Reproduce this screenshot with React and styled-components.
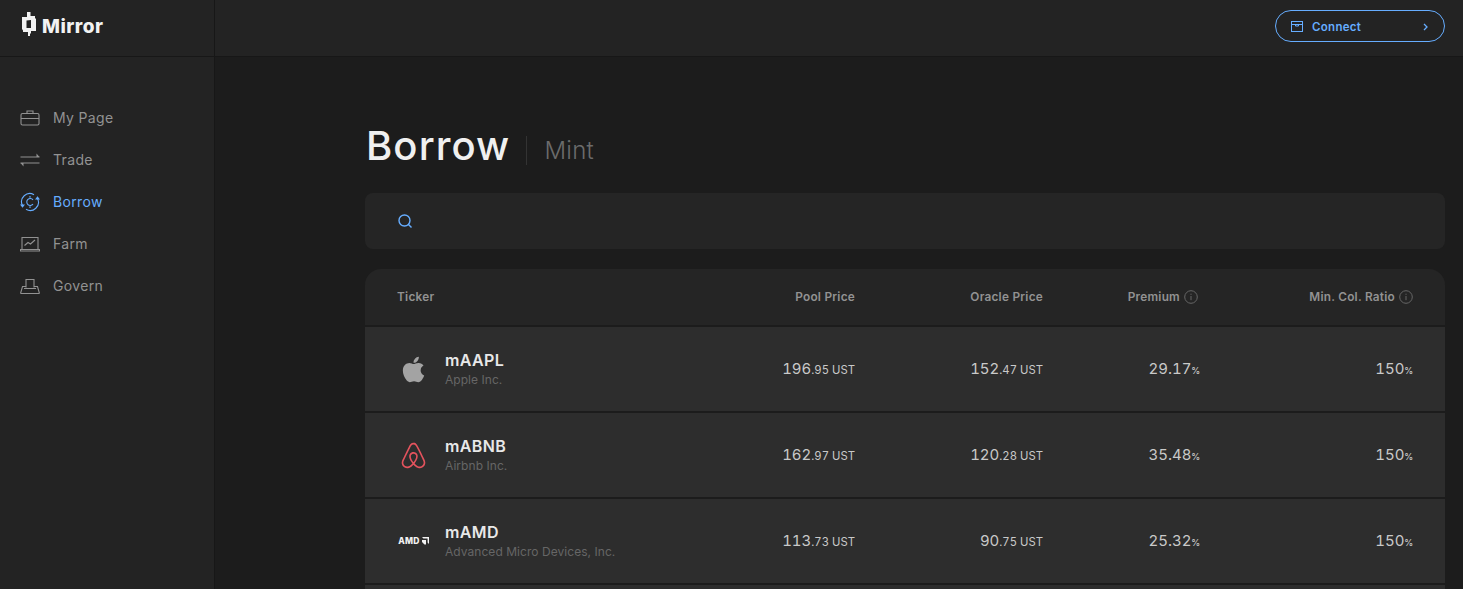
import React from "react";
import styled, { createGlobalStyle } from "styled-components";
import { FaApple, FaAirbnb } from "react-icons/fa";

const Global = createGlobalStyle`
  html, body { margin: 0; height: 100%; overflow: hidden; background: #1c1c1c; }
  body { font-family: Inter, "Open Sans", sans-serif; }
  * { box-sizing: border-box; }
`;

const Shell = styled.div`
  display: grid;
  grid-template-columns: 215px 1fr;
  height: 100vh;
  overflow: hidden;
`;
const Sidebar = styled.aside`
  background: #232323;
  border-right: 1px solid #171717;
`;
const Brand = styled.div`
  height: 57px;
  border-bottom: 1px solid #171717;
  display: flex;
  align-items: center;
  gap: 6px;
  padding: 0 0 4px 22px;
  color: #f2f2f2;
  font-size: 19px;
  font-weight: 800;
  letter-spacing: 0.5px;
  svg { margin-top: -4px; }
`;
const Nav = styled.nav`
  display: flex;
  flex-direction: column;
  padding-top: 40px;
`;
const NavItem = styled.div`
  height: 42px;
  display: flex;
  align-items: center;
  gap: 13px;
  padding-left: 20px;
  font-size: 14px;
  letter-spacing: 0.35px;
  color: ${(p) => (p.$active ? "#66adff" : "#929292")};
  svg { flex: none; }
  span { padding-bottom: 2px; }
`;
const Main = styled.div`
  min-width: 0;
  display: flex;
  flex-direction: column;
`;
const TopBar = styled.header`
  height: 57px;
  flex: none;
  background: #232323;
  border-bottom: 1px solid #171717;
  display: flex;
  justify-content: flex-end;
  align-items: flex-start;
  padding: 10px 18px 0 0;
`;
const ConnectButton = styled.button`
  width: 170px;
  height: 32px;
  border: 1px solid #66adff;
  border-radius: 16px;
  background: transparent;
  color: #66adff;
  display: flex;
  align-items: center;
  gap: 9px;
  padding: 1px 15px 0;
  font: 600 11.5px Inter, sans-serif;
  letter-spacing: 0.3px;
  span { flex: 1; text-align: left; }
`;
const Content = styled.main`
  padding: 65px 18px 0 150px;
`;
const TitleRow = styled.div`
  height: 71px;
  display: flex;
  align-items: flex-start;
`;
const Title = styled.h1`
  margin: 0;
  font-size: 40px;
  line-height: 48px;
  font-weight: 500;
  color: #f0f0f0;
  padding-right: 16px;
  padding-left: 1px;
  letter-spacing: 1.1px;
`;
const SubTitle = styled.div`
  margin-top: 14px;
  height: 29px;
  border-left: 1px solid #333;
  padding-left: 17px;
  font-size: 24px;
  line-height: 30px;
  font-weight: 300;
  letter-spacing: 0.3px;
  color: #6b6b6b;
`;
const SearchBar = styled.div`
  height: 56px;
  background: #252525;
  border-radius: 8px;
  display: flex;
  align-items: center;
  padding-left: 32px;
  margin-bottom: 20px;
`;
const Table = styled.div`
  border-radius: 16px 16px 0 0;
  overflow: hidden;
`;
const Row = styled.div`
  display: grid;
  grid-template-columns: 1fr 188px 188px 157px 213px;
  align-items: center;
  padding: 0 32px;
  height: ${(p) => (p.$head ? "58px" : "86px")};
  background: ${(p) => (p.$head ? "#252525" : "#2d2d2d")};
  border-bottom: 2px solid #1c1c1c;
`;
const HeadCell = styled.div`
  display: flex;
  align-items: center;
  gap: 4px;
  justify-content: ${(p) => (p.$left ? "flex-start" : "flex-end")};
  padding: 0 ${(p) => p.$inset || 0}px 1px 0;
  font-size: 11.8px;
  font-weight: 600;
  color: #929292;
  letter-spacing: 0.25px;
`;
const Ticker = styled.div`
  display: flex;
  align-items: center;
  gap: 15px;
`;
const LogoSlot = styled.div`
  width: 33px;
  display: flex;
  justify-content: center;
  align-items: center;
  color: ${(p) => p.$color};
`;
const AmdMark = styled.div`
  display: flex;
  align-items: center;
  gap: 1px;
  color: #f2f2f2;
  font-size: 8.5px;
  font-weight: 800;
  letter-spacing: 0.2px;
`;
const Symbol = styled.div`
  font-size: 16px;
  font-weight: 600;
  line-height: 20px;
  letter-spacing: 0.4px;
  color: #e8e8e8;
`;
const Company = styled.div`
  padding-top: 1px;
  font-size: 12px;
  line-height: 18px;
  letter-spacing: 0.05px;
  color: #666;
`;
const Value = styled.div`
  text-align: right;
  padding-bottom: 2px;
  font-size: 15px;
  font-weight: 400;
  font-variant-numeric: tabular-nums;
  color: #c9c9c9;
  small { font-size: 11.3px; letter-spacing: 0; }
  i { font-style: normal; font-size: 9px; font-weight: 500; letter-spacing: -0.3px; }
`;

const Ico = ({ children, w = 20, h = 20, vb = "0 0 20 20" }) => (
  <svg width={w} height={h} viewBox={vb} fill="none" stroke="currentColor" strokeWidth="1.1">
    {children}
  </svg>
);

const items = [
  ["My Page", <Ico><rect x="1" y="5.5" width="18" height="11.5" rx="1.5" /><path d="M1 10.500h18M7 5.500V3h6v2.500" /></Ico>],
  ["Trade", <Ico><path d="M0.500 7h19M0.500 13h19" strokeWidth="1.2" /><path d="M16.500 3.500V7H19.500zM3.500 16.500V13H0.500z" fill="currentColor" stroke="none" /></Ico>],
  ["Borrow", <Ico><path d="M2.500 13.500A8.200 8.200 0 0 1 14 2.700M17.500 6.500A8.200 8.200 0 0 1 6 17.300" /><path d="M0 12.500h5l-2.500 3.300zM20 7.500h-5l2.500-3.300z" fill="currentColor" stroke="none" /><path d="M13 7.800A3.500 3.500 0 1 0 13 12.200M10 4v1.700M10 14.300V16" /></Ico>],
  ["Farm", <Ico><path d="M2 15V3.500h16V15M0.500 15.500h19v1.500h-19z" /><path d="M4.500 11.500l3.500-3 2.500 1.500 4.500-4" /></Ico>],
  ["Govern", <Ico><path d="M6 11.500V3.500h8v8M0.500 17.500l2-7h3.500M19.500 17.500l-2-7H14M0.500 17.500h19M4 12.500h12" /></Ico>],
];

const rows = [
  { s: "mAAPL", n: "Apple Inc.", p: ["196", ".95"], o: ["152", ".47"], pr: "29.17", logo: <LogoSlot $color="#a3a3a3"><FaApple size={29} /></LogoSlot> },
  { s: "mABNB", n: "Airbnb Inc.", p: ["162", ".97"], o: ["120", ".28"], pr: "35.48", logo: <LogoSlot $color="#e4535d"><FaAirbnb size={29} /></LogoSlot> },
  {
    s: "mAMD", n: "Advanced Micro Devices, Inc.", p: ["113", ".73"], o: ["90", ".75"], pr: "25.32",
    logo: (
      <LogoSlot>
        <AmdMark>
          AMD
          <svg width="8" height="8" viewBox="0 0 8 8" fill="#f2f2f2"><path d="M1 0h7v7L6.600 5.600V1.400H2.400zM1 3h4v4.500H3.500L1 5z" /></svg>
        </AmdMark>
      </LogoSlot>
    ),
  },
];

const InfoIcon = () => (
  <svg width="14" height="14" viewBox="0 0 14 14" fill="none" stroke="#666" strokeWidth="1">
    <circle cx="7" cy="7" r="6.300" />
    <path d="M7 6v4.200M7 3.700v1.100" />
  </svg>
);

export default function App() {
  return (
    <Shell>
      <Global />
      <Sidebar>
        <Brand>
          <svg width="14" height="24" viewBox="0 0 14 24" fill="#f2f2f2">
            <path fillRule="evenodd" d="M5 0h3.500v4H13v2l1 1v12H9v2l-1 1v2H6v-4H1v-1.500L0 17V5h5zM4.500 8.500v7.500H9V8z" />
          </svg>
          Mirror
        </Brand>
        <Nav>
          {items.map(([label, icon]) => (
            <NavItem key={label} $active={label === "Borrow"}>
              {icon}
              <span>{label}</span>
            </NavItem>
          ))}
        </Nav>
      </Sidebar>
      <Main>
        <TopBar>
          <ConnectButton>
            <svg width="12" height="11" viewBox="0 0 12 11" fill="none" stroke="currentColor" strokeWidth="1">
              <rect x="0.500" y="0.500" width="11" height="10" />
              <path d="M0.500 3.500h11M4.500 3.500v1.500h3V3.500" />
            </svg>
            <span>Connect</span>
            <svg width="7" height="8" viewBox="0 0 7 8" fill="none" stroke="currentColor" strokeWidth="1.300">
              <path d="M2 1l3 3-3 3" />
            </svg>
          </ConnectButton>
        </TopBar>
        <Content>
          <TitleRow>
            <Title>Borrow</Title>
            <SubTitle>Mint</SubTitle>
          </TitleRow>
          <SearchBar>
            <svg width="16" height="16" viewBox="0 0 16 16" fill="none" stroke="#66adff" strokeWidth="1.400">
              <circle cx="7.500" cy="7.500" r="5.500" />
              <path d="M11.500 11.500l3 3" />
            </svg>
          </SearchBar>
          <Table>
            <Row $head>
              <HeadCell $left>Ticker</HeadCell>
              <HeadCell>Pool Price</HeadCell>
              <HeadCell>Oracle Price</HeadCell>
              <HeadCell $inset={2}>Premium <InfoIcon /></HeadCell>
              <HeadCell>Min. Col. Ratio <InfoIcon /></HeadCell>
            </Row>
            {rows.map((r) => (
              <Row key={r.s}>
                <Ticker>
                  {r.logo}
                  <div>
                    <Symbol>{r.s}</Symbol>
                    <Company>{r.n}</Company>
                  </div>
                </Ticker>
                <Value>{r.p[0]}<small>{r.p[1]} UST</small></Value>
                <Value>{r.o[0]}<small>{r.o[1]} UST</small></Value>
                <Value>{r.pr}<i>%</i></Value>
                <Value>150<i>%</i></Value>
              </Row>
            ))}
            <Row />
          </Table>
        </Content>
      </Main>
    </Shell>
  );
}
